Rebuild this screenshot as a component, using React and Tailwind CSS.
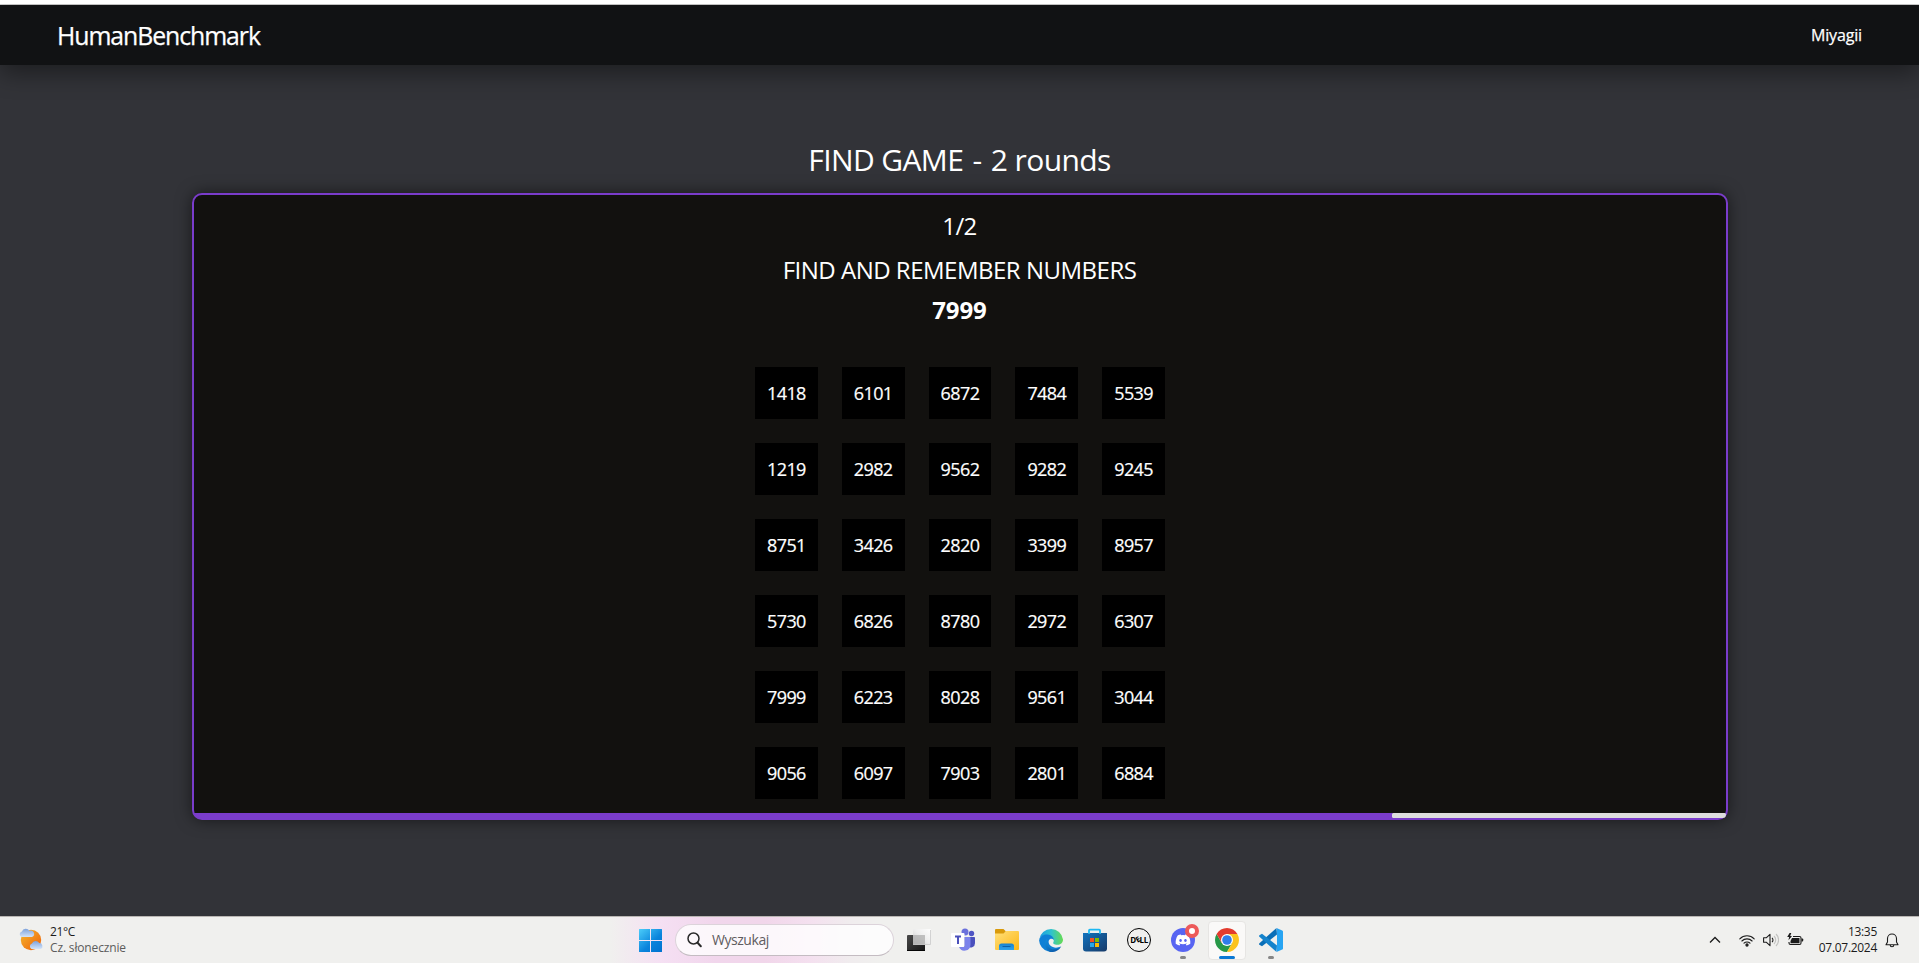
import React from "react";
import { FaDiscord } from "react-icons/fa";

const rows = [
  ["1418", "6101", "6872", "7484", "5539"],
  ["1219", "2982", "9562", "9282", "9245"],
  ["8751", "3426", "2820", "3399", "8957"],
  ["5730", "6826", "8780", "2972", "6307"],
  ["7999", "6223", "8028", "9561", "3044"],
  ["9056", "6097", "7903", "2801", "6884"],
];

function Navbar() {
  return (
    <nav className="relative z-10 flex h-[60px] shrink-0 items-center justify-between bg-[#111214] pr-[57px] pl-[57px] shadow-[0_8px_24px_rgba(0,0,0,0.42)] [-webkit-text-stroke:0.25px_white]">
      <span className="text-[24.8px] leading-9 tracking-[-1.05px]">HumanBenchmark</span>
      <span className="text-[16px] leading-6 tracking-[-0.15px]">Miyagii</span>
    </nav>
  );
}

function Game() {
  return (
    <main className="flex grow flex-col items-center pt-[77px]">
      <h1 className="text-[30px] leading-9 tracking-[-0.6px]">
        FIND GAME <span className="mx-[2px]">-</span> 2 rounds
      </h1>
      <section className="mt-[15px] flex h-[627px] w-[1536px] flex-col items-center rounded-[10px] border-2 border-[#7a3ccb] bg-[#12110f] pt-[13px] shadow-[0_0_16px_rgba(0,0,0,0.55)]">
        <p className="text-2xl leading-9 tracking-[-0.6px]">1/2</p>
        <p className="mt-2 text-2xl leading-9 tracking-[-0.5px]">FIND AND REMEMBER NUMBERS</p>
        <p className="mt-1 text-2xl leading-9 font-bold tracking-[-0.1px]">7999</p>
        <div className="mt-[39px] ml-px grid w-[410px] grid-cols-5 gap-6">
          {rows.flat().map((n) => (
            <div key={n} className="flex h-[52px] items-center justify-center bg-black text-[18px] tracking-[-0.6px] [-webkit-text-stroke:0.2px_white]">
              {n}
            </div>
          ))}
        </div>
        <div className="mt-auto flex h-[5px] w-full rounded-b-[8px] bg-[#7a3ccb]">
          <div className="ml-auto w-[334px] rounded-[3px] rounded-br-[7px] bg-[#dddddd]" />
        </div>
      </section>
    </main>
  );
}

function WeatherIcon() {
  return (
    <svg width="24" height="24" viewBox="0 0 24 24">
      <defs>
        <linearGradient id="sun" x1="0" y1="0" x2="1" y2="1">
          <stop offset="0.1" stopColor="#f3b02c" />
          <stop offset="0.8" stopColor="#f0700f" />
        </linearGradient>
        <linearGradient id="cloud" x1="0" y1="0" x2="0" y2="1">
          <stop offset="0" stopColor="#7fa3dc" />
          <stop offset="1" stopColor="#d3e4fa" />
        </linearGradient>
      </defs>
      <circle cx="12" cy="12" r="10.2" fill="url(#sun)" />
      <path d="M2.500 9a2.900 2.900 0 0 1 .4-5.500A4.200 4.200 0 0 1 10.400 2.800 3.200 3.200 0 0 1 13 9Z" fill="url(#cloud)" />
      <path d="M12.500 21a3 3 0 0 1 .4-5.500A4.200 4.200 0 0 1 20.200 15 3.200 3.200 0 0 1 21.800 21Z" fill="url(#cloud)" />
    </svg>
  );
}

function WindowsIcon() {
  return (
    <svg width="24" height="24" viewBox="0 0 24 24">
      <defs>
        <linearGradient id="win" gradientUnits="userSpaceOnUse" x1="0" y1="0" x2="22" y2="24">
          <stop offset="0" stopColor="#4ed0fb" />
          <stop offset="0.6" stopColor="#0a84dc" />
          <stop offset="1" stopColor="#0072d0" />
        </linearGradient>
      </defs>
      <path d="M0 1.500Q0 1 .5 1H11v11H0ZM12 1h10.500q.5 0 .5.500V12H12ZM0 13h11v11H.5q-.5 0-.5-.5ZM12 13h11v10.500q0 .5-.5.500H12Z" fill="url(#win)" />
    </svg>
  );
}

function TaskViewIcon() {
  return (
    <svg width="24" height="24" viewBox="0 0 24 24">
      <defs>
        <linearGradient id="tvDark" x1="0" y1="0" x2="1" y2="1">
          <stop offset="0" stopColor="#4a4a4a" />
          <stop offset="1" stopColor="#161616" />
        </linearGradient>
        <linearGradient id="tvLight" x1="0" y1="1" x2="1" y2="0">
          <stop offset="0" stopColor="#c2c2c2" />
          <stop offset="0.5" stopColor="#ededed" />
          <stop offset="1" stopColor="#ffffff" />
        </linearGradient>
      </defs>
      <rect x="0" y="7" width="18" height="16" rx="1" fill="url(#tvDark)" />
      <rect x="0" y="22" width="18" height="1" fill="#050505" />
      <rect x="6" y="1" width="18" height="16" rx="1" fill="url(#tvLight)" opacity="0.88" />
      <path d="M6 16.500h17.500V2" fill="none" stroke="#c9c9c9" strokeWidth="0.8" />
      <rect x="6" y="7" width="12" height="9.500" fill="#b4b4b4" opacity="0.7" />
    </svg>
  );
}

function TeamsIcon() {
  return (
    <svg width="24" height="24" viewBox="0 0 24 24">
      <circle cx="20.500" cy="5.500" r="2.700" fill="#4f55c4" />
      <circle cx="14" cy="4" r="3.500" fill="#6a70dc" />
      <path d="M17 9h6.200q.8 0 .8.800V15a4.500 4.500 0 0 1-7 3.800Z" fill="#4a50bd" />
      <path d="M8 9h10.500q1 0 1 1v7a6 6 0 0 1-11.500 2Z" fill="#7b83eb" />
      <path d="M9 9h5v10H9Z" fill="#4f56b8" opacity="0.55" />
      <rect x="0" y="5" width="13.500" height="14" rx="1" fill="#ffffff" />
      <path d="M4 8.500h6M7 8.500v7.500" stroke="#4b51bb" strokeWidth="2" fill="none" />
    </svg>
  );
}

function FolderIcon() {
  return (
    <svg width="24" height="24" viewBox="0 0 24 24">
      <defs>
        <linearGradient id="fold" x1="0" y1="0" x2="1" y2="1">
          <stop offset="0" stopColor="#ffe07c" />
          <stop offset="1" stopColor="#fdb714" />
        </linearGradient>
        <linearGradient id="foldBlue" x1="0" y1="0" x2="0" y2="1">
          <stop offset="0" stopColor="#1782cf" />
          <stop offset="1" stopColor="#2fa3ea" />
        </linearGradient>
      </defs>
      <path d="M0 2q0-1 1-1h7.500l2.500 2.500L8 7H0Z" fill="#d99a0b" />
      <path d="M0 5.500h8.500L11 3h12q1 0 1 1v17q0 1-1 1H1q-1 0-1-1Z" fill="url(#fold)" />
      <path d="M4 22v-4q0-2.500 2.500-2.500h10q2.500 0 2.500 2.500v4Z" fill="url(#foldBlue)" />
      <path d="M7.500 18.500h8" stroke="#0b61a8" strokeWidth="1" />
    </svg>
  );
}

function EdgeIcon() {
  return (
    <svg width="24" height="24" viewBox="0 0 24 24">
      <defs>
        <linearGradient id="edgeTop" x1="0" y1="0.500" x2="1" y2="0.500">
          <stop offset="0" stopColor="#1c9de2" />
          <stop offset="0.5" stopColor="#2fc2cf" />
          <stop offset="1" stopColor="#66dc50" />
        </linearGradient>
        <linearGradient id="edgeLow" x1="0" y1="0" x2="1" y2="1">
          <stop offset="0" stopColor="#1391de" />
          <stop offset="1" stopColor="#0c4f9e" />
        </linearGradient>
      </defs>
      <path d="M0.200 11.500A12 12 0 0 1 24 11.500c0 3.400-2.600 5.300-5.600 5.300-3.500 0-4.600-1.300-4.100-2.200.9-1.500.5-3.400-.8-4.800C10 6 2.500 6.500.2 11.500Z" fill="url(#edgeTop)" />
      <path d="M.1 12.500C.8 8 5 6.400 8.500 6.600c4 .3 6.400 3 6.300 5.400-1.500-2-4-1.800-5 .5-1.300 4.800 4.700 9.300 12.200 6A12 12 0 0 1 .1 12.500Z" fill="#0f80d6" />
      <path d="M8.500 10.500C6 16 10.500 22.500 16.500 21.200 19 20.700 21 19.800 22.400 18.200A12 12 0 0 1 11 24C5.500 22 4.500 13.500 8.500 10.500Z" fill="url(#edgeLow)" />
    </svg>
  );
}

function StoreIcon() {
  return (
    <svg width="24" height="24" viewBox="0 0 24 24">
      <defs>
        <linearGradient id="store" x1="0" y1="0" x2="1" y2="1">
          <stop offset="0" stopColor="#1272bd" />
          <stop offset="1" stopColor="#173a68" />
        </linearGradient>
      </defs>
      <path d="M6 6V2.500q0-.8.800-.8h9.400q.8 0 .8.800V6" fill="none" stroke="#1cb8f2" strokeWidth="1.800" />
      <path d="M0 5h24v15.500q0 3-3 3H3q-3 0-3-3Z" fill="url(#store)" />
      <path d="M5.200 5h1.700M16.200 5h1.700" stroke="#35cdfa" strokeWidth="1.600" />
      <rect x="7" y="10" width="4" height="4" fill="#f25022" />
      <rect x="12" y="10" width="4" height="4" fill="#7fba00" />
      <rect x="7" y="15" width="4" height="4" fill="#28a8ea" />
      <rect x="12" y="15" width="4" height="4" fill="#ffb900" />
    </svg>
  );
}

function DellIcon() {
  return (
    <div className="flex size-6 items-center justify-center rounded-full border-[1.5px] border-black text-[8px] leading-none font-bold tracking-[-0.4px] text-black">
      <span>D</span>
      <span className="-rotate-[30deg] text-[7.5px]">E</span>
      <span>LL</span>
    </div>
  );
}

function DiscordIcon() {
  return (
    <div className="relative flex size-6 items-center justify-center rounded-full bg-[#5865f2]">
      <FaDiscord className="size-4 text-white" />
      <span className="absolute -top-1 left-[14px] size-[14px] rounded-full border-4 border-[#ed5a5a] bg-white" />
      <span className="absolute top-7 left-[9px] h-[3px] w-1.5 rounded-full bg-[#868686]" />
    </div>
  );
}

function ChromeIcon() {
  return (
    <div className="relative -mx-[7px] flex h-[39px] w-[38px] items-center justify-center rounded-[4px] border border-[#e6e5e3] bg-[#faf9f8]">
      <svg width="24" height="24" viewBox="0 0 24 24">
        <path d="M1.610 6A12 12 0 0 0 12 24l5.200-9L12 12 6.800 15Z" fill="#279847" />
        <path d="M22.390 6A12 12 0 0 1 12 24l5.200-9L12 6Z" fill="#fcc31e" />
        <path d="M1.610 6A12 12 0 0 1 22.390 6H12L6.800 15Z" fill="#e33b2e" />
        <circle cx="12" cy="12" r="6" fill="#ffffff" />
        <circle cx="12" cy="12" r="4.800" fill="#2f7de9" />
      </svg>
      <span className="absolute bottom-0 left-[10px] h-[3px] w-4 rounded-full bg-[#0a78d4]" />
    </div>
  );
}

function VSCodeIcon() {
  return (
    <div className="relative size-6">
      <svg width="24" height="24" viewBox="0 0 24 24">
        <path d="M17.500 0 18 6.500 3 18.200 .4 16.800Q-.3 16 .4 15.200Z" fill="#0a6fb8" />
        <path d="M17.500 24 18 17.500 3 5.800 .4 7.200Q-.3 8 .4 8.800Z" fill="#1583cc" />
        <path d="M17.500 0 23.200 2.400Q24 2.800 24 3.600V20.400Q24 21.200 23.200 21.600L17.500 24Q18 23.500 18 22.500V1.500Q18 .5 17.500 0Z" fill="#27a4f2" />
      </svg>
      <span className="absolute top-7 left-[9px] h-[3px] w-1.5 rounded-full bg-[#868686]" />
    </div>
  );
}

function SearchBox() {
  return (
    <div className="-mr-[7px] -ml-2 flex h-8 w-[219px] items-center gap-[11px] rounded-full border border-[#dcd3da] border-b-[#c4bcc2] bg-white/80 pl-[11px]">
      <svg width="15" height="16" viewBox="0 0 15 16" fill="none" stroke="#2a2a2a" strokeLinecap="round">
        <circle cx="6.500" cy="6.500" r="5.500" strokeWidth="1.500" />
        <path d="M10.600 10.800 13.800 14.200" strokeWidth="2" />
      </svg>
      <span className="-ml-px text-[14px] leading-5 tracking-[-0.45px] text-[#5f5c5f]">Wyszukaj</span>
    </div>
  );
}

function Tray() {
  return (
    <div className="ml-auto flex items-center pr-5 text-[#1b1b1b]">
      <svg width="12" height="8" viewBox="0 0 12 8" fill="none" stroke="currentColor" strokeWidth="1.300">
        <path d="M1 6.500 6 1.500l5 5" />
      </svg>
      <svg className="ml-[18px]" width="16" height="13" viewBox="0 0 16 13" fill="none" stroke="currentColor" strokeWidth="1.100" strokeLinecap="round">
        <path d="M.8 4.800a10.200 10.200 0 0 1 14.400 0M2.900 7a7.200 7.200 0 0 1 10.200 0M5 9.200a4.200 4.200 0 0 1 6 0" />
        <circle cx="8" cy="11" r="1.100" fill="currentColor" />
      </svg>
      <svg className="ml-2" width="16" height="14" viewBox="0 0 16 14" fill="none" stroke="currentColor" strokeWidth="1.100" strokeLinejoin="round">
        <path d="M.6 4.800h2.600L7 1.300v11.400L3.200 9.200H.6Z" />
        <path d="M9 4.800a3 3 0 0 1 0 4.400" />
        <path d="M11 3a5.500 5.500 0 0 1 0 8M13 1a8.300 8.300 0 0 1 0 12" stroke="#c2c2c0" />
      </svg>
      <svg className="ml-2" width="17" height="14" viewBox="0 0 17 14" fill="none">
        <path d="M6 3h6.500q1.500 0 1.500 1.500v5q0 1.500-1.500 1.500H3.500Q2 11 2 9.500V8.500" stroke="#1b1b1b" strokeWidth="1.100" transform="translate(0 .5)" />
        <path d="M5 5h7.500v5.300H3.500V8Z" fill="#1b1b1b" />
        <path d="M14.500 5.500h1q.7 0 .7.700v1.600q0 .7-.7.700h-1Z" fill="#1b1b1b" />
        <path d="M2.600 0 .2 4h1.900L1.500 7.200 5 3H3.200L4.300 0Z" fill="#1b1b1b" />
      </svg>
      <div className="ml-[13px] w-[60px] text-right text-[12px] leading-4 tracking-[-0.3px] whitespace-nowrap">
        <div>13:35</div>
        <div className="flex justify-end">07.07.2024</div>
      </div>
      <svg className="ml-2" width="14" height="15" viewBox="0 0 14 15" fill="none" stroke="currentColor" strokeWidth="1.100" strokeLinejoin="round">
        <path d="M2.500 9V5.500a4.500 4.500 0 0 1 9 0V9l1.500 2.800H1Z" />
        <path d="M5.200 12a1.800 1.800 0 0 0 3.600 0" />
      </svg>
    </div>
  );
}

function Taskbar() {
  return (
    <footer className="flex h-[47px] shrink-0 items-center border-t border-[#b9b6b3] bg-[#f0f0ee] bg-[linear-gradient(90deg,transparent_610px,#f5e0f3_660px,#f1d6ec_715px,#f1d6ea_765px,#f4e0ef_810px,#f0ecee_850px,transparent_880px)] font-normal">
      <div className="flex w-[639px] items-center gap-[7px] pl-[19px]">
        <WeatherIcon />
        <div className="text-[12px] leading-4 whitespace-nowrap">
          <div className="tracking-[-0.35px] text-[#1b1b1b]">21°C</div>
          <div className="tracking-[-0.15px] text-[#5c5c5c]">Cz. słonecznie</div>
        </div>
      </div>
      <div className="flex items-center gap-5">
        <WindowsIcon />
        <SearchBox />
        <TaskViewIcon />
        <TeamsIcon />
        <FolderIcon />
        <EdgeIcon />
        <StoreIcon />
        <DellIcon />
        <DiscordIcon />
        <ChromeIcon />
        <VSCodeIcon />
      </div>
      <Tray />
    </footer>
  );
}

export default function App() {
  return (
    <div className="flex h-[963px] w-[1919px] flex-col overflow-hidden border-t-4 border-white bg-[#323338] font-['Open_Sans',sans-serif] text-white">
      <div className="h-px shrink-0 bg-[#d5d5d5]" />
      <Navbar />
      <Game />
      <Taskbar />
    </div>
  );
}
